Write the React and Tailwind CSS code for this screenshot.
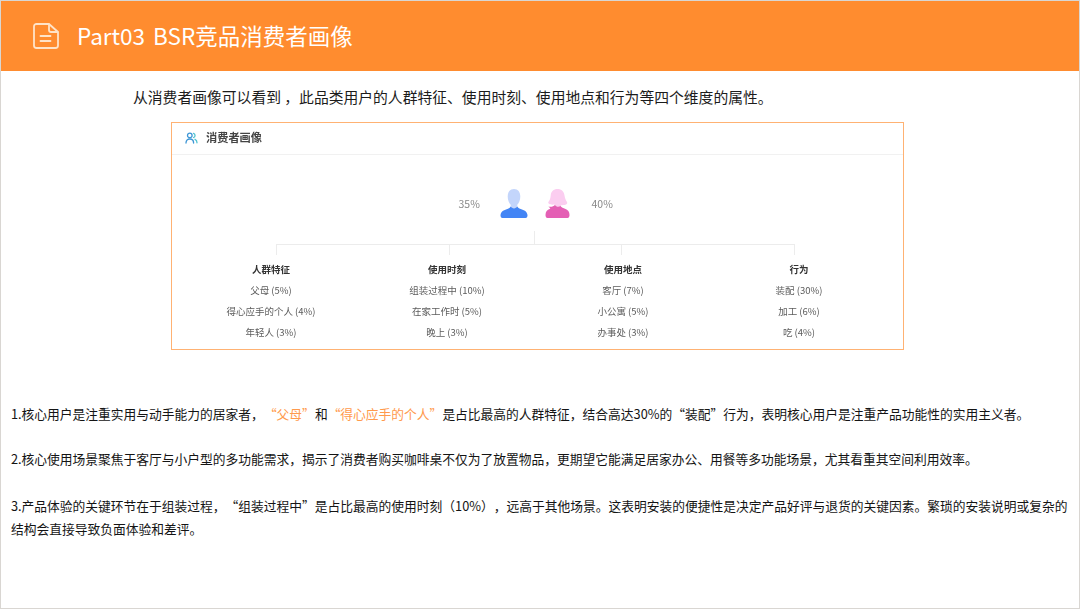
import React from 'react';

const font = { fontFamily: '"Noto Sans CJK SC", "Noto Sans", sans-serif' };

const columns = [
  { title: '人群特征', items: ['父母 (5%)', '得心应手的个人 (4%)', '年轻人 (3%)'] },
  { title: '使用时刻', items: ['组装过程中 (10%)', '在家工作时 (5%)', '晚上 (3%)'] },
  { title: '使用地点', items: ['客厅 (7%)', '小公寓 (5%)', '办事处 (3%)'] },
  { title: '行为', items: ['装配 (30%)', '加工 (6%)', '吃 (4%)'] },
];

function DocIcon() {
  return (
    <svg width="26" height="26" viewBox="0 0 26 26" fill="none" stroke="#ffe3c8" strokeWidth="1.800" strokeLinecap="round" strokeLinejoin="round">
      <path d="M1 3.500A2.500 2.500 0 0 1 3.500 1H16l9 8v13.500a2.500 2.500 0 0 1-2.500 2.500H3.500A2.500 2.500 0 0 1 1 22.500Z" />
      <path d="M16 1.500V7a2 2 0 0 0 2 2h6.500" />
      <path d="M7.500 13h10M7.500 18h10" />
    </svg>
  );
}

function UsersIcon() {
  return (
    <svg width="13" height="13" viewBox="0 0 13 13" fill="none" strokeWidth="1.300" strokeLinecap="round">
      <circle cx="4.800" cy="3.400" r="2.300" stroke="#3f97d6" />
      <path d="M1 11c0-2.500 1.700-4 3.800-4s3.800 1.500 3.800 4" stroke="#3f97d6" />
      <path d="M8.500 1.300a2.200 2.200 0 0 1 0 4.200M10 7.300c1.300.6 2 1.800 2 3.500" stroke="#4fc3d0" />
    </svg>
  );
}

function MaleIcon() {
  return (
    <svg width="28" height="29" viewBox="0 0 28 29">
      <path d="M14 0c4 0 6.300 3 6.300 7.500 0 3.500-1.300 6.500-3 8.300v3.200H10.700v-3.200c-1.700-1.800-3-4.800-3-8.300C7.700 3 10 0 14 0Z" fill="#c3d5fb" />
      <path d="M10.500 17.500c1 1.200 2.200 1.800 3.500 1.800s2.500-.6 3.500-1.800c.3 1 1 1.700 2.500 2.200 3.500 1.100 7 2.300 7.500 6.300.1 1.800-.5 3-2 3H2.500c-1.500 0-2.100-1.200-2-3 .5-4 4-5.200 7.500-6.300 1.500-.5 2.200-1.200 2.500-2.200Z" fill="#4385f5" />
    </svg>
  );
}

function FemaleIcon() {
  return (
    <svg width="25" height="29" viewBox="0 0 25 29">
      <path d="M12.500 0c4 0 6.500 2.500 7 6.500.4 3 1.500 5 2.500 6.500.6 1 .2 2-1 2.500-1.500.6-3.500.8-5 .8v2.700H9.500v-3.500c-2 .3-4.500.2-5.500-.7-1-.6-.9-1.600-.3-2.300 1.200-1.500 1.800-3.500 2-6C6 2.500 8.500 0 12.500 0Z" fill="#fbcdf0" />
      <path d="M3.500 17.500c2.500.7 5 0 6.500-1.500 1 2 4 2.200 5.500 1 1 1.800 3 2 4.500 2.800 3 1.100 4.500 3 4.500 6.200 0 1.500-.5 3-2 3H2.500C1 29 .5 27.500.5 26c0-3.200 1.500-5.100 4.500-6.200 1-.5-1-1.300-1.500-2.300Z" fill="#e45fb4" />
    </svg>
  );
}

export default function App() {
  return (
    <div style={font} className="w-[1080px] h-[609px] bg-white overflow-hidden border border-[#d9d6d2] text-[#222] [text-spacing-trim:space-all]">
      <div className="h-[70px] bg-[#ff8c2f] flex items-center pl-[32px]">
        <DocIcon />
        <h1 className="ml-[18px] pb-[2px] text-[22.500px] font-normal text-white leading-none [word-spacing:3px]">Part03 BSR竞品消费者画像</h1>
      </div>

      <p className="ml-[132px] mt-[16px] text-[14.800px] leading-[20px] text-[#1c1c1c]">从消费者画像可以看到 ，此品类用户的人群特征、使用时刻、使用地点和行为等四个维度的属性。</p>

      <div className="ml-[170px] mt-[15px] w-[733px] h-[228px] border border-[#ffb273] blur-[0.3px]">
        <div className="h-[32px] border-b border-[#f1f1f1] flex items-center pl-[13px]">
          <UsersIcon />
          <span className="ml-[8px] pb-[2px] text-[11.200px] font-bold text-[#444]">消费者画像</span>
        </div>

        <div className="mt-[34px] flex justify-center items-center pr-[4px]">
          <span className="w-[21px] text-[10.500px] text-[#888]">35%</span>
          <span className="ml-[20px]"><MaleIcon /></span>
          <span className="ml-[17px]"><FemaleIcon /></span>
          <span className="ml-[22px] w-[21px] text-[10.500px] text-[#888]">40%</span>
        </div>

        <div className="ml-[362px] mt-[13px] w-px h-[13px] bg-[#ececec]" />
        <div className="ml-[104px] w-[519px] h-[11px] border-t border-[#ececec] flex justify-between">
          <div className="w-px h-[10px] bg-[#ececec]" />
          <div className="w-px h-[10px] bg-[#ececec]" />
          <div className="w-px h-[10px] bg-[#ececec]" />
          <div className="w-px h-[10px] bg-[#ececec]" />
        </div>

        <div className="ml-[11px] mt-[4px] w-[704px] grid grid-cols-4">
          {columns.map((col) => (
            <div key={col.title} className="text-center">
              <div className="h-[21px] text-[9.500px] leading-[21px] font-bold text-[#333]">{col.title}</div>
              {col.items.map((item) => (
                <div key={item} className="h-[21px] text-[9.500px] leading-[21px] text-[#5c5c5c]">{item}</div>
              ))}
            </div>
          ))}
        </div>
      </div>

      <div className="ml-[10px] mt-[52px] w-[1060px] text-[12.760px] leading-[23px] text-[#141414]">
        <p>1.核心用户是注重实用与动手能力的居家者，<span className="text-[#ff9a4d]">“父母”</span>和<span className="text-[#ff9a4d]">“得心应手的个人”</span>是占比最高的人群特征，结合高达30%的“装配”行为，表明核心用户是注重产品功能性的实用主义者。</p>
        <p className="mt-[22px]">2.核心使用场景聚焦于客厅与小户型的多功能需求，揭示了消费者购买咖啡桌不仅为了放置物品，更期望它能满足居家办公、用餐等多功能场景，尤其看重其空间利用效率。</p>
        <p className="mt-[24px]">3.产品体验的关键环节在于组装过程，“组装过程中”是占比最高的使用时刻（10%），远高于其他场景。这表明安装的便捷性是决定产品好评与退货的关键因素。繁琐的安装说明或复杂的结构会直接导致负面体验和差评。</p>
      </div>
    </div>
  );
}
